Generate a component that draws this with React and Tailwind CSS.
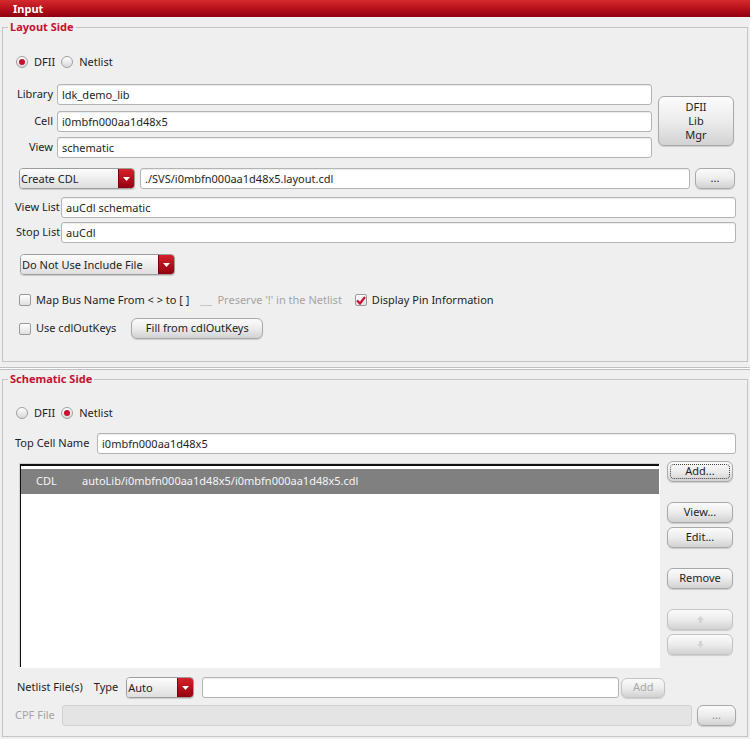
import React from "react";

/* =========================
   SMALL WIDGETS
========================= */

function Field({ value = "", className = "", disabled = false }) {
  return (
    <div
      className={`h-[21px] rounded-[3px] border px-[4px] leading-[19px] overflow-hidden whitespace-nowrap ${
        disabled
          ? "border-[#d2d2d2] bg-[#e4e4e4]"
          : "border-[#b4b4b4] bg-white shadow-[inset_0_1px_1px_rgba(0,0,0,0.08)]"
      } ${className}`}
    >
      {value}
    </div>
  );
}

function Button({ children, className = "", disabled = false, focused = false }) {
  return (
    <div
      className={`flex items-center justify-center rounded-[6px] border border-[#a9a9a9] bg-gradient-to-b from-[#fbfbfb] via-[#ececec] to-[#d2d2d2] shadow-[0_1px_1px_rgba(0,0,0,0.15)] ${
        disabled ? "text-[#a8a8a8] border-[#c4c4c4]" : "text-[#1e1e1e]"
      } ${className}`}
    >
      {focused ? (
        <span className="flex h-[calc(100%-4px)] w-[calc(100%-4px)] items-center justify-center rounded-[4px] border border-dotted border-[#404040]">
          {children}
        </span>
      ) : (
        children
      )}
    </div>
  );
}

function Combo({ value, className = "" }) {
  return (
    <div
      className={`flex h-[21px] overflow-hidden rounded-[4px] border border-[#9c9c9c] shadow-[0_1px_1px_rgba(0,0,0,0.15)] ${className}`}
    >
      <div className="flex-1 bg-gradient-to-b from-[#fdfdfd] to-[#dedede] pl-[1px] leading-[19px] text-[#1e1e1e]">
        {value}
      </div>
      <div className="flex w-[16px] items-center justify-center border-l border-[#7a0010] bg-gradient-to-b from-[#d8202a] to-[#94000e]">
        <svg width="7" height="4" viewBox="0 0 7 4">
          <path d="M0 0 H7 L3.5 4 Z" fill="#ffffff" />
        </svg>
      </div>
    </div>
  );
}

function Radio({ checked, label }) {
  return (
    <div className="flex items-center">
      <span className="flex h-[12px] w-[12px] items-center justify-center rounded-full border border-[#a0a0a0] bg-gradient-to-b from-[#ffffff] to-[#d8d8d8]">
        {checked && <span className="h-[6px] w-[6px] rounded-full bg-[#c8102e]" />}
      </span>
      <span className="ml-[6px]">{label}</span>
    </div>
  );
}

function Check({ checked = false, disabled = false, label, className = "" }) {
  return (
    <div className={`flex items-center ${className}`}>
      {disabled ? (
        <span className="h-[12px] w-[12px] border-b border-[#c4c4c4]" />
      ) : (
        <span className="flex h-[12px] w-[12px] items-center justify-center rounded-[2px] border border-[#9a9a9a] bg-gradient-to-b from-[#ffffff] to-[#e0e0e0]">
          {checked && (
            <svg width="10" height="9" viewBox="0 0 10 9">
              <path d="M1 4.5 L4 7.5 L9 1" fill="none" stroke="#c8102e" strokeWidth="2.2" />
            </svg>
          )}
        </span>
      )}
      <span className={`ml-[5px] ${disabled ? "text-[#a4a4a4]" : ""}`}>{label}</span>
    </div>
  );
}

function Legend({ children }) {
  return (
    <legend className="ml-[5px] px-[2px] text-[11px] font-bold leading-[14px] text-[#c8102e]">
      {children}
    </legend>
  );
}

/* =========================
   PAGE
========================= */

export default function App() {
  return (
    <div className="h-[739px] w-[750px] overflow-hidden bg-[#efefef] font-['Noto_Sans',sans-serif] text-[11px] text-[#1e1e1e]">

      {/* title bar */}
      <div className="h-[17px] bg-gradient-to-b from-[#d42a30] via-[#b8101a] to-[#900010] pl-[13px] text-[11px] font-bold leading-[17px] text-white">
        Input
      </div>

      {/* =========================
          LAYOUT SIDE
      ========================= */}
      <fieldset className="mx-[2px] mt-[3px] w-[746px] border border-[#c4c4c4] pb-[22px]">
        <Legend>Layout Side</Legend>

        <div className="mt-[21px] flex h-[14px] items-center gap-[6px] pl-[13px]">
          <Radio checked label="DFII" />
          <Radio label="Netlist" />
        </div>

        <div className="mt-[15px] flex items-center">
          <div className="flex flex-col">
            {[
              ["Library", "ldk_demo_lib", ""],
              ["Cell", "i0mbfn000aa1d48x5", "mt-[6px]"],
              ["View", "schematic", "mt-[5px]"],
            ].map(([label, value, mt]) => (
              <div key={label} className={`flex items-center ${mt}`}>
                <div className="w-[54px] pr-[4px] text-right">{label}</div>
                <Field value={value} className="w-[595px]" />
              </div>
            ))}
          </div>
          <Button className="ml-[6px] h-[50px] w-[76px] flex-col leading-[14px]">
            <span>DFII</span>
            <span>Lib</span>
            <span>Mgr</span>
          </Button>
        </div>

        <div className="mt-[10px] flex items-center">
          <Combo value="Create CDL" className="ml-[16px] w-[116px]" />
          <Field value="./SVS/i0mbfn000aa1d48x5.layout.cdl" className="ml-[5px] w-[550px]" />
          <Button className="ml-[5px] h-[21px] w-[40px]">...</Button>
        </div>

        <div className="mt-[8px] flex items-center pl-[12px]">
          <div className="w-[46px]">View List</div>
          <Field value="auCdl schematic" className="w-[675px]" />
        </div>
        <div className="mt-[4px] flex items-center pl-[13px]">
          <div className="w-[45px]">Stop List</div>
          <Field value="auCdl" className="w-[675px]" />
        </div>

        <Combo value="Do Not Use Include File" className="ml-[17px] mt-[11px] w-[155px]" />

        <div className="mt-[18px] flex h-[14px] items-center pl-[16px]">
          <Check label="Map Bus Name From < > to [ ]" />
          <Check disabled label="Preserve '!' in the Netlist" className="ml-[11px]" />
          <Check checked label="Display Pin Information" className="ml-[13px]" />
        </div>

        <div className="mt-[11px] flex items-center pl-[16px]">
          <Check label="Use cdlOutKeys" />
          <Button className="ml-[15px] h-[21px] w-[132px]">Fill from cdlOutKeys</Button>
        </div>
      </fieldset>

      {/* splitter */}
      <div className="h-[10px] pt-[5px]">
        <div className="h-[3px] border-t border-b border-[#c0c0c0] bg-white" />
      </div>

      {/* =========================
          SCHEMATIC SIDE
      ========================= */}
      <fieldset className="mx-[2px] w-[746px] border border-[#c4c4c4] pb-[10px]">
        <Legend>Schematic Side</Legend>

        <div className="mt-[20px] flex h-[14px] items-center gap-[6px] pl-[13px]">
          <Radio label="DFII" />
          <Radio checked label="Netlist" />
        </div>

        <div className="mt-[13px] flex items-center pl-[12px]">
          <div className="w-[82px]">Top Cell Name</div>
          <Field value="i0mbfn000aa1d48x5" className="w-[639px]" />
        </div>

        <div className="mt-[9px] flex">
          {/* netlist list */}
          <div className="ml-[16px] h-[205px] w-[641px] border-t border-l border-[#d0d0d0] border-r border-b border-r-white border-b-white">
            <div className="h-full border-t-2 border-l border-[#111111] bg-white pt-[3px]">
              <div className="flex h-[25px] items-center bg-[#808080] text-[#f4f4f4]">
                <span className="ml-[15px] w-[46px]">CDL</span>
                <span>autoLib/i0mbfn000aa1d48x5/i0mbfn000aa1d48x5.cdl</span>
              </div>
            </div>
          </div>

          {/* side buttons */}
          <div className="-mt-[2px] ml-[7px] flex w-[66px] flex-col">
            <Button focused className="h-[21px]">Add...</Button>
            <Button className="mt-[20px] h-[21px]">View...</Button>
            <Button className="mt-[4px] h-[21px]">Edit...</Button>
            <Button className="mt-[20px] h-[21px]">Remove</Button>
            <Button disabled className="mt-[20px] h-[21px]">
              <svg width="9" height="9" viewBox="0 0 9 9">
                <path d="M4.5 1 L8 5 H6 V8 H3 V5 H1 Z" fill="#d4d4d4" />
              </svg>
            </Button>
            <Button disabled className="mt-[4px] h-[21px]">
              <svg width="9" height="9" viewBox="0 0 9 9">
                <path d="M4.5 8 L8 4 H6 V1 H3 V4 H1 Z" fill="#d4d4d4" />
              </svg>
            </Button>
          </div>
        </div>

        <div className="mt-[9px] flex items-center pl-[14px]">
          <span>Netlist File(s)</span>
          <span className="ml-[11px]">Type</span>
          <Combo value="Auto" className="ml-[8px] w-[68px]" />
          <Field className="ml-[8px] w-[417px]" />
          <Button disabled className="ml-[2px] h-[20px] w-[44px]">Add</Button>
        </div>

        <div className="mt-[7px] flex items-center pl-[12px]">
          <span className="w-[47px] text-[#a4a4a4]">CPF File</span>
          <Field disabled className="w-[630px]" />
          <Button className="ml-[5px] h-[21px] w-[39px] text-[#8a8a8a]">...</Button>
        </div>
      </fieldset>

    </div>
  );
}
